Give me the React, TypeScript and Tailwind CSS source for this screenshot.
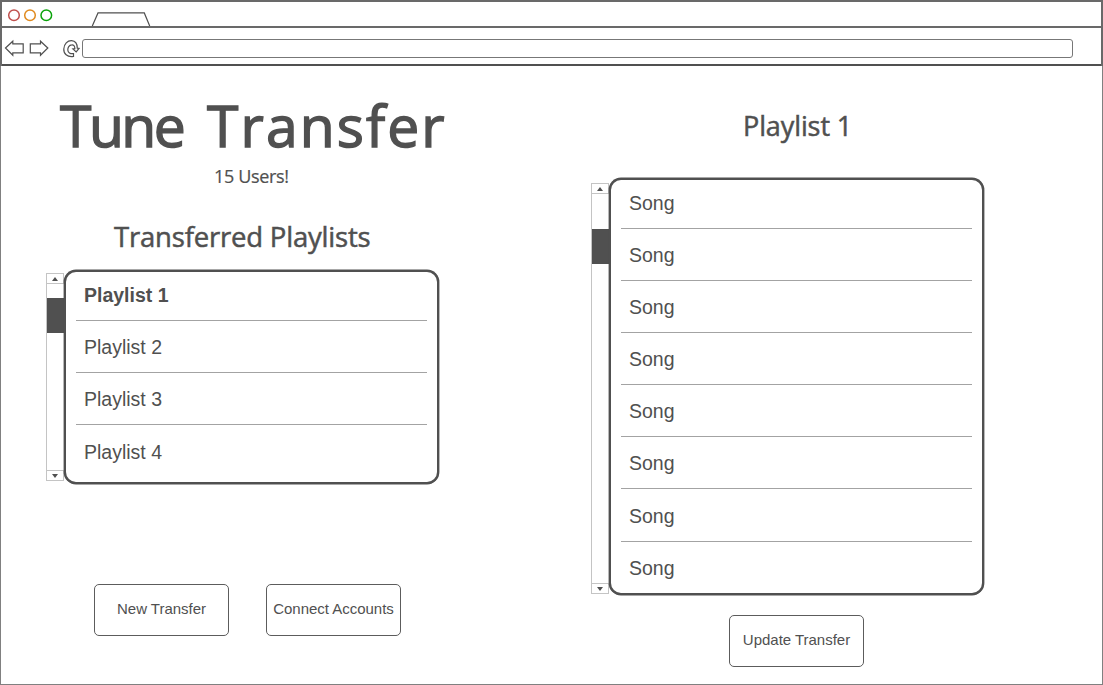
import React from "react";

type ListProps = {
  items: string[];
  selected?: number;
  listClass: string;
  barClass: string;
  thumbClass: string;
};

const songs = Array.from({ length: 8 }, () => "Song");
const playlists = ["Playlist 1", "Playlist 2", "Playlist 3", "Playlist 4"];

function Arrow({ down = false }: { down?: boolean }) {
  return (
    <div className="flex h-[11px] shrink-0 items-center justify-center border border-[#c4c4c4] bg-white">
      <svg width="6" height="4" viewBox="0 0 6 4" fill="#505050">
        <path d={down ? "M0 0H6L3 4Z" : "M0 4H6L3 0Z"} />
      </svg>
    </div>
  );
}

function ScrollList({ items, selected, listClass, barClass, thumbClass }: ListProps) {
  return (
    <div className="flex items-start">
      <div className={`flex w-[18px] flex-col ${barClass}`}>
        <Arrow />
        <div className="flex-1 border-l border-[#c4c4c4]">
          <div className={`h-[35px] w-[17px] bg-[#505050] ${thumbClass}`} />
        </div>
        <Arrow down />
      </div>
      <ul
        className={`relative w-[375px] rounded-[12px] border-2 border-[#505050] bg-white pl-[10px] pr-[10px] shadow-[0_0_0_0.4px_#505050] ${listClass}`}
      >
        {items.map((item, i) => (
          <li
            key={i}
            className={`flex items-end border-b pb-[14px] pl-[8px] text-[19.5px] leading-[22px] ${
              i === 0 ? "h-[49px]" : "h-[52.2px]"
            } ${i < items.length - 1 ? "border-[#a3a3a3]" : "border-transparent"} ${
              i === selected ? "font-bold" : ""
            }`}
          >
            {item}
          </li>
        ))}
      </ul>
    </div>
  );
}

function Button({ children }: { children: React.ReactNode }) {
  return (
    <button className="flex h-[52px] w-[135px] items-center justify-center whitespace-nowrap rounded-[5px] border border-[#5c5c5c] bg-white pb-px text-[15px] tracking-[-0.02px]">
      {children}
    </button>
  );
}

function BrowserBar() {
  return (
    <header className="shrink-0 border-x-2 border-t-2 border-[#696969]">
      <div className="flex h-6 items-end">
        <svg width="150" height="24" viewBox="2 2 150 24" fill="none">
          <g strokeWidth="1.5">
            <circle cx="14" cy="15.3" r="5.3" stroke="#c0504d" />
            <circle cx="30" cy="15.3" r="5.3" stroke="#e08a1e" />
            <circle cx="46.3" cy="15.3" r="5.3" stroke="#0aa30a" />
          </g>
          <path d="M92.3 26L98 12.9H144.3L149.7 26" stroke="#505050" strokeWidth="1.2" />
        </svg>
      </div>
      <div className="flex h-[40px] border-y-2 border-t-[#696969] border-b-[#505050]">
        <svg width="80" height="36" viewBox="2 28 80 36" fill="none" stroke="#505050" strokeWidth="1.2">
          <path d="M5.5 48L12.8 41.2V43.8H23.2V52.8H12.8V55.2Z" />
          <path d="M47.8 48L40.5 41.2V43.8H30.3V52.8H40.5V55.2Z" />
          <path d="M73.5 56.5C67 57.5 63.5 53.5 63.8 49C64 44 67.5 40.5 71.5 40.6C75 40.8 77.3 43.5 77.3 48.2L79 48.4L76.2 51.9L72.9 49L74.9 48.7C74.8 46 73.5 44.7 71.8 44.9C69 45 67.7 47.5 67.8 50C68 52.5 70 54 73.5 53.6Z" />
        </svg>
        <div className="mt-[11px] h-[19px] w-[991px] rounded-[3px] border border-[#777777]" />
      </div>
    </header>
  );
}

export default function App() {
  return (
    <div className="flex h-[685px] w-[1103px] flex-col overflow-hidden bg-white font-['Liberation_Sans',Arial,sans-serif] text-[#505050]">
      <BrowserBar />
      <main className="flex flex-1 border border-t-0 border-[#808080] pl-[45px]">
        <section className="w-[545px]">
          <div className="w-[413px] font-['Comic_Sans_MS','Open_Sans',sans-serif]">
            <h1 className="mt-[29px] flex h-[60px] whitespace-nowrap pl-[14px] text-[57px] font-medium leading-[60px] [-webkit-text-stroke:1.4px_#505050]">
              <span className="w-[147px] tracking-[-2.5px]">Tune </span>
              <span className="tracking-[2.1px]">Transfer</span>
            </h1>
            <p className="mt-[11px] h-5 pl-[168px] text-[18px] leading-5 tracking-[-0.35px] [-webkit-text-stroke:0.2px_#505050]">
              15 Users!
            </p>
            <h2 className="mt-[35px] h-8 whitespace-nowrap pl-[68px] text-[27.5px] leading-8 tracking-[-0.2px] [-webkit-text-stroke:0.5px_#505050]">
              Transferred Playlists
            </h2>
          </div>
          <div className="mt-[17px]">
            <ScrollList
              items={playlists}
              selected={0}
              listClass="h-[214px]"
              barClass="mt-[3px] h-[208px]"
              thumbClass="mt-[14px]"
            />
          </div>
          <div className="ml-[48px] mt-[100px] flex gap-[37px]">
            <Button>New Transfer</Button>
            <Button>Connect Accounts</Button>
          </div>
        </section>
        <section className="w-[394px]">
          <h2 className="mt-[44px] h-8 pl-[152px] font-['Comic_Sans_MS','Open_Sans',sans-serif] text-[27px] leading-8 tracking-[-0.1px] [-webkit-text-stroke:0.5px_#505050]">
            Playlist 1
          </h2>
          <div className="mt-[35.5px]">
            <ScrollList
              items={songs}
              listClass="h-[417px]"
              barClass="mt-[5.5px] h-[411px]"
              thumbClass="mt-[35px]"
            />
          </div>
          <div className="ml-[138px] mt-[20.5px]">
            <Button>Update Transfer</Button>
          </div>
        </section>
      </main>
    </div>
  );
}
